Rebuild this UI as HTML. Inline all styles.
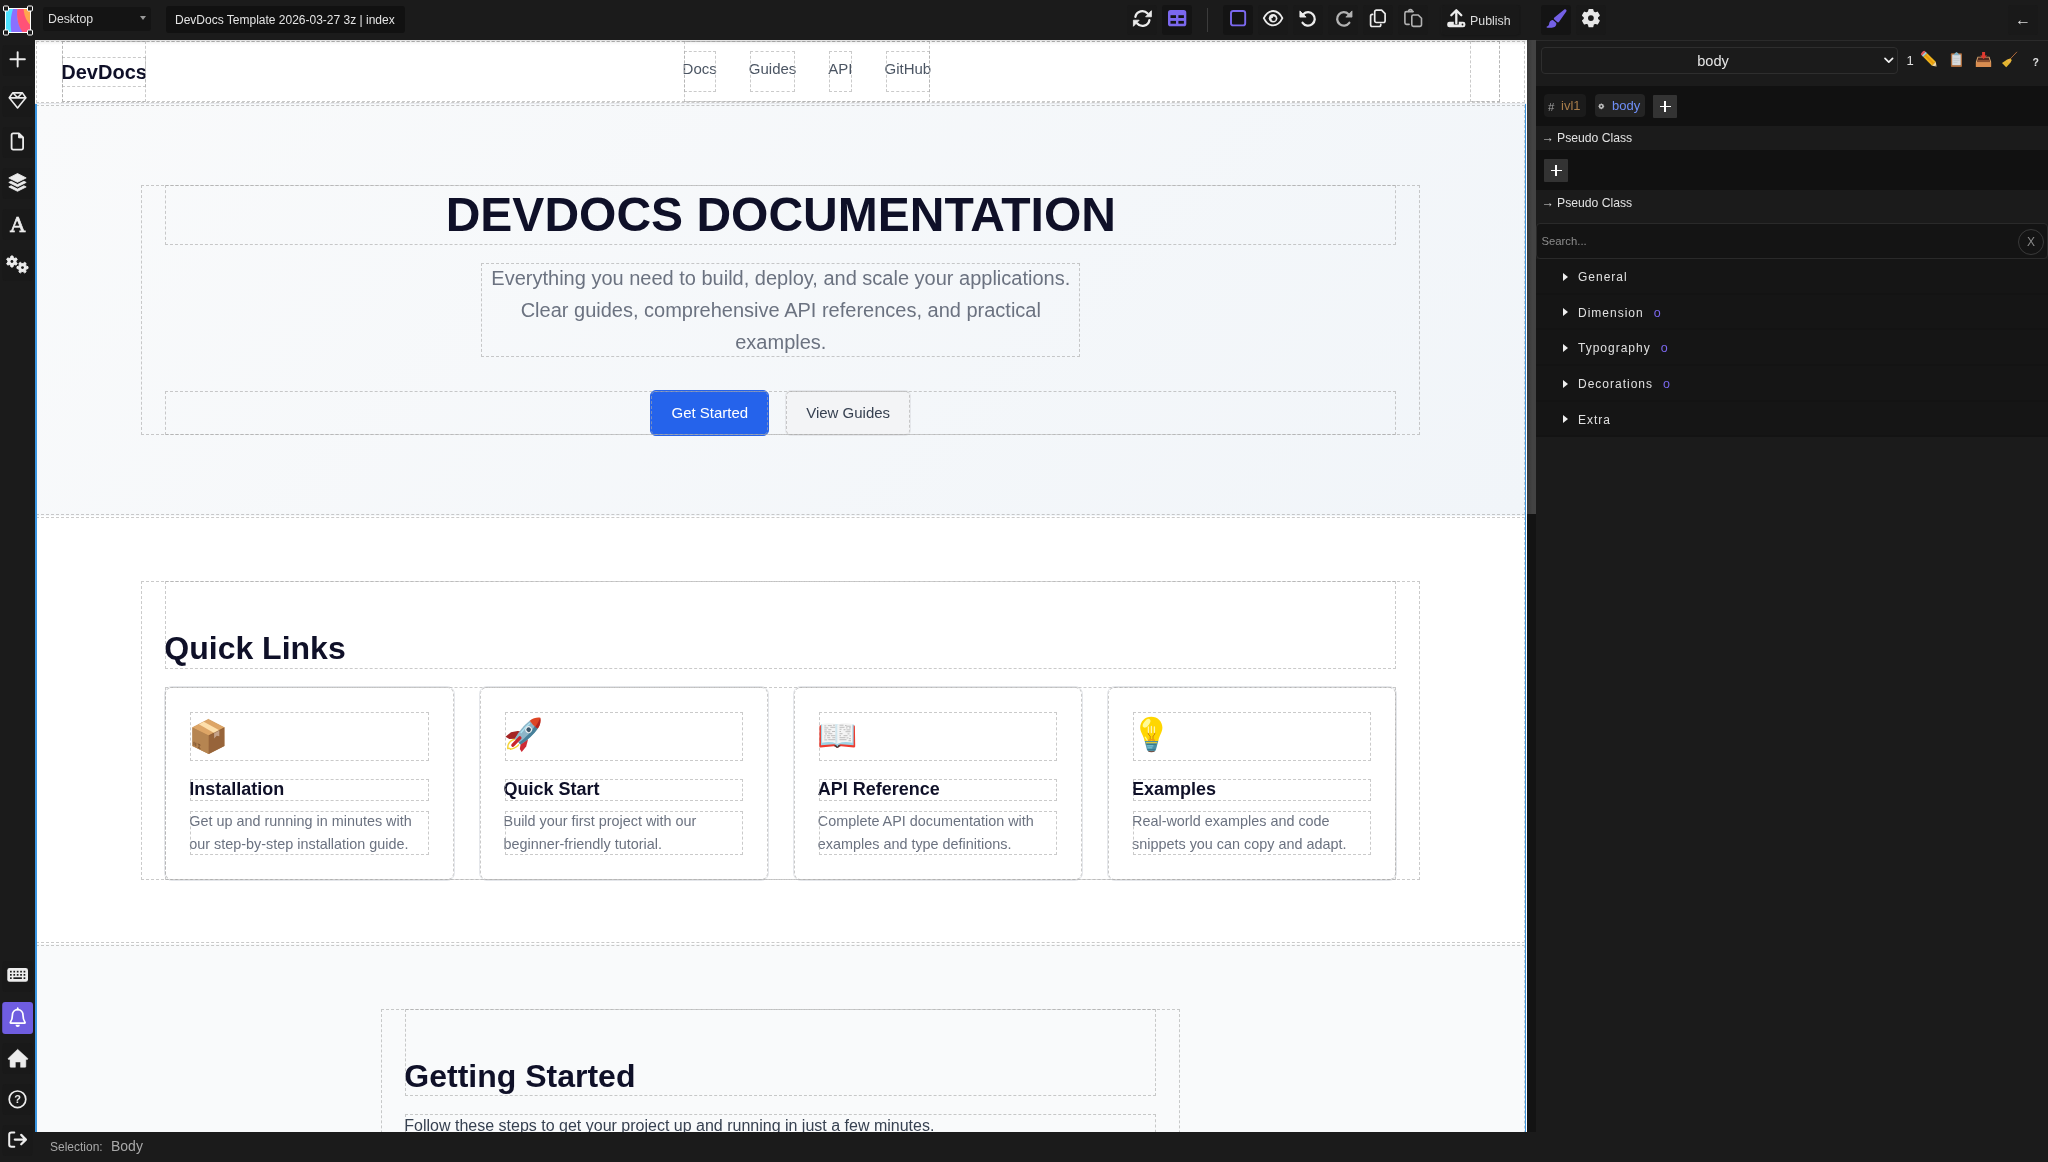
<!DOCTYPE html>
<html lang="en">
<head>
<meta charset="utf-8">
<title>DevDocs Template 2026-03-27 3z | index</title>
<style>
*{box-sizing:border-box}
html,body{margin:0;padding:0}
body{width:2048px;height:1162px;overflow:hidden;background:#1b1b1b;will-change:transform;font-family:"Liberation Sans",Arial,sans-serif;color:#ddd;position:relative}
svg{display:block}
.abs{position:absolute}

/* ---------- top bar ---------- */
#top{position:absolute;left:0;top:0;width:2048px;height:40px;background:#1b1b1b}
#logo{position:absolute;left:2px;top:5px;width:32px;height:31px}
#device{position:absolute;left:43px;top:7px;width:108px;height:24px;background:#141414;border-radius:3px;font-size:12.3px;line-height:25px;color:#ddd;padding-left:5px}
#device i{position:absolute;right:5px;top:9px;width:0;height:0;border-left:3.5px solid transparent;border-right:3.5px solid transparent;border-top:4.5px solid #999}
#title{position:absolute;left:166px;top:6px;width:239px;height:27px;background:#111;border-radius:3px;font-size:12px;line-height:29px;color:#e4e4e4;padding-left:9px;white-space:nowrap}
#sep{position:absolute;left:1207px;top:8px;width:1px;height:24px;background:#3c3c3c}
#publish{position:absolute;left:1441px;top:5px;width:78px;height:30px;border-radius:3px;box-shadow:0 1px 2px rgba(0,0,0,.18)}
#publish span{position:absolute;left:29px;top:0;line-height:33px;font-size:12.4px;color:#ddd}

/* ---------- left bar ---------- */
#left{position:absolute;left:0;top:40px;width:35px;height:1122px;background:#1b1b1b}

/* ---------- bottom bar ---------- */
#bottom{position:absolute;left:35px;top:1132px;width:2013px;height:30px;background:#1b1b1b;color:#aaa;white-space:nowrap}
#bottom .s1{position:absolute;left:15px;top:8px;font-size:12px;line-height:14px;color:#a8a8a8}
#bottom .s2{position:absolute;left:76px;top:5px;font-size:14px;line-height:18px;color:#a8a8a8}

/* ---------- canvas ---------- */
#canvas{position:absolute;left:35px;top:40px;width:1492px;height:1092px;overflow:hidden;background:#fff}
#canvas:after{content:"";position:absolute;left:0;top:0;width:1492px;height:5px;background:linear-gradient(180deg,rgba(0,0,0,.13),rgba(0,0,0,.04) 50%,rgba(0,0,0,0));z-index:9}
#scroll{position:absolute;left:1527px;top:40px;width:9px;height:1092px;background:#131313}
#scroll i{position:absolute;left:0;top:0;width:9px;height:474px;background:linear-gradient(90deg,#353535 0,#3d3d3d 30%,#434343 60%,#434343 100%)}
#page{position:absolute;left:.3px;top:0;width:1491px;font-family:"Liberation Sans",Arial,Helvetica,sans-serif;color:#374151;line-height:1.6;font-size:16px;background:#fff}
#page *{outline:1px dashed rgba(170,170,170,.62);outline-offset:-2px}
#page svg, #page svg *{outline:none}
#page header{position:absolute;left:0;top:0;width:1491px;height:64px;background:#fff;border-bottom:1px solid #e8eaee;z-index:5}
#page .hc{width:1440px;height:63px;margin:0 0 0 26px;display:flex;justify-content:space-between;align-items:stretch}
#page .logo{display:flex;align-items:center;font-size:20px;font-weight:700;color:#0f1028}
#page .logo span{display:block;line-height:32px}
#page nav{display:flex;align-items:center;gap:32px;height:63px;position:relative;left:-1.2px}
#page nav a{display:block;font-size:15px;line-height:24px;padding:7px 0 12px;color:#4b5563}
#page .hr{width:32px}
#page .hero{margin-top:64px;padding:80px 0;background:linear-gradient(135deg,#f9fafb 0%,#f1f5f9 100%);text-align:center}
#page .container{width:1281px;margin:0 auto;padding:0 24px}
#page h1{margin:0;font-size:48px;line-height:62.4px;font-weight:700;color:#0f1028;text-transform:uppercase}
#page .lead{width:601px;margin:16px auto 0;font-size:20px;line-height:32px;color:#6b7280}
#page .btns{margin-top:32px;height:46px;display:flex;justify-content:center;gap:16px}
#page .btn{display:block;font-size:15px;line-height:24px;padding:10px 20px;border-radius:6px;border:1px solid #2563eb;background:#2563eb;color:#fff}
#page .btn.alt{background:#f3f4f6;border-color:#e5e7eb;color:#374151}
#page section.s{padding:64px 0 63px}
#page section.gs{padding:64px 0}
#page .gs h2{margin-bottom:15.7px}
#page h2{margin:0 0 16px;padding-top:48px;font-size:32px;line-height:41.6px;font-weight:700;color:#0f1028}
#page .grid{display:grid;grid-template-columns:repeat(4,1fr);gap:24px}
#page .card{display:block;border:1px solid #e5e7eb;border-radius:8px;padding:24px;background:#fff}
#page .ic{height:51.2px;margin-bottom:16px;position:relative}
#page h3{margin:0 0 8px;font-size:18px;line-height:23.4px;font-weight:700;color:#0f1028}
#page .card p{margin:0;font-size:14.4px;line-height:23.04px;color:#6b7280}
#page .gs{background:#f9fafb}
#page .gs .container{width:801px}
#page .gs p{margin:0 0 16px;color:#374151}
#selL,#selR{position:absolute;top:64px;width:2px;height:1028px;background:#3b97e3;z-index:4}
#selL{left:0}#selR{left:1489.600px;width:1.600px}

/* ---------- right panel ---------- */

#right{position:absolute;left:1536px;top:40px;width:512px;height:1092px;background:#1b1b1b;font-size:12px;color:#ddd;white-space:nowrap}
#right .line{position:absolute;left:0;top:0;width:512px;height:1px;background:#2b2b2b}
#selbox{position:absolute;left:5px;top:7px;width:357px;height:27px;border:1px solid #2e2e2e;border-radius:4px;text-align:center;font-size:14.6px;line-height:27px;color:#e6e6e6;padding-right:13px}
#right .dark{position:absolute;left:0;width:512px;background:#111}
.tag{position:absolute;top:54px;height:23px;border-radius:4px;background:#1b1b1b;font-size:13px;line-height:23px}
.tag span{position:absolute;top:0}
.plusb{position:absolute;width:24px;height:23px;background:#333;border-radius:1px}
.plusb:before,.plusb:after{content:"";position:absolute;background:#fff}
.plusb:before{left:6.500px;top:10.900px;width:11px;height:1.300px}
.plusb:after{left:11.350px;top:6px;width:1.300px;height:11px}
.ph{position:absolute;left:21px;font-size:12.2px;line-height:16px;color:#e2e2e2}
.ph i{position:absolute;left:-15.5px;top:0;font-style:normal;font-size:12.500px;line-height:16px;color:#d8d8d8}
#search{position:absolute;left:0;top:183px;width:512px;height:36px;border:1px solid #2a2a2a;border-radius:4px;background:#141414;font-size:11.3px;line-height:35px;color:#8c8c8c;padding-left:4.5px}
#search i{position:absolute;right:3px;top:4.5px;width:26px;height:26px;border:1px solid #3a3a3a;border-radius:50%;font-style:normal;text-align:center;line-height:24px;font-size:12px;color:#8a8a8a}
.sector{position:absolute;left:0;width:512px;height:35.700px;background:#151515;border-bottom:2px solid #131313;font-size:12px;letter-spacing:1px;line-height:37px;color:#e0e0e0;padding-left:42px}
.sector:before{content:"";position:absolute;left:27px;top:13.500px;border-left:5px solid #eee;border-top:4px solid transparent;border-bottom:4px solid transparent}
.sector b{font-weight:400;color:#7b68ee;margin-left:10px;letter-spacing:0;font-size:12.500px}
</style>
</head>
<body>

<div id="top">
  <svg id="logo" viewBox="0 0 32 31">
    <defs><clipPath id="lc"><rect x="3.5" y="3.5" width="25" height="24"/></clipPath></defs>
    <g clip-path="url(#lc)">
      <rect x="3" y="3" width="26" height="25" fill="#4fe2ff"/>
      <path d="M11.5 3 C8 12 8.5 20 9.5 28 L22 28 C16 21 14 12 15.5 3Z" fill="#8a70ff"/>
      <path d="M15.5 3 C14 12 16 21 21 28 L29 28 L29 3Z" fill="#ff5277"/>
      <path d="M21.5 3 C22 11 24.5 16 29 21 L29 3Z" fill="#ffa64d"/>
    </g>
    <rect x="3.5" y="3.5" width="25" height="24" fill="none" stroke="#fff" stroke-width="1"/>
    <g fill="#1b1b1b" stroke="#fff" stroke-width="1"><rect x="1.5" y="1" width="5" height="5" rx="1"/><rect x="25.5" y="1" width="5" height="5" rx="1"/><rect x="1.5" y="25" width="5" height="5" rx="1"/><rect x="25.5" y="25" width="5" height="5" rx="1"/></g>
  </svg>
  <div id="device">Desktop<i></i></div>
  <div id="title">DevDocs Template 2026-03-27 3z | index</div>
  <div id="sep"></div>
  <svg id="topicons" class="abs" style="left:0;top:0" width="2048" height="40" viewBox="0 0 2048 40" fill="none">
    <!-- button plates -->
    <g fill="#141414"><rect x="1162" y="5" width="30" height="30" rx="3"/><rect x="1223" y="5" width="30" height="30" rx="3"/><rect x="1541" y="5" width="30" height="30" rx="3"/></g>
    <g fill="#191919"><rect x="1127" y="5" width="30" height="30" rx="3"/><rect x="1258" y="5" width="30" height="30" rx="3"/><rect x="1293" y="5" width="30" height="30" rx="3"/><rect x="1328" y="5" width="30" height="30" rx="3"/><rect x="1363" y="5" width="30" height="30" rx="3"/><rect x="1398" y="5" width="30" height="30" rx="3"/><rect x="1442" y="5" width="79" height="30" rx="3"/><rect x="1576" y="5" width="30" height="30" rx="3"/><rect x="2008" y="5" width="30" height="30" rx="3"/></g>
    <!-- sync -->
    <g stroke="#ececec" stroke-width="2.3" stroke-linecap="round">
      <path d="M1135.4 16.8A7 7 0 0 1 1147.6 13.6"/><path d="M1149.4 20.2A7 7 0 0 1 1137.2 23.4"/>
    </g>
    <path d="M1151.400 10.700V16.800H1145.600Z M1133.400 26.300V20.200H1139.200Z" fill="#ececec" stroke="#ececec" stroke-width="0.8" stroke-linejoin="round"/>
    <!-- table -->
    <rect x="1168" y="10.1" width="18.3" height="16.2" rx="2.6" fill="#7b68ee"/>
    <g fill="#141414"><rect x="1170.5" y="15.2" width="5.5" height="2.8"/><rect x="1178.4" y="15.2" width="5.5" height="2.8"/><rect x="1170.5" y="20.9" width="5.5" height="2.8"/><rect x="1178.4" y="20.9" width="5.5" height="2.8"/></g>
    <!-- square -->
    <rect x="1231" y="11" width="14.2" height="14.4" rx="2.2" stroke="#7b68ee" stroke-width="1.9"/>
    <!-- eye -->
    <path d="M1263.8 18.2C1266 13.6 1269.4 11 1273.1 11S1280.2 13.6 1282.4 18.2C1280.2 22.8 1276.8 25.4 1273.1 25.4S1266 22.8 1263.8 18.2Z" stroke="#ececec" stroke-width="1.8" stroke-linejoin="round"/>
    <circle cx="1273.1" cy="18.2" r="4.3" fill="#ececec"/><circle cx="1273.6" cy="18.7" r="2.2" fill="#1b1b1b"/><circle cx="1271.8" cy="16.9" r="1.2" fill="#ececec"/>
    <!-- undo -->
    <path d="M1303.3 14.2A6.7 6.7 0 1 1 1302.6 22.8" stroke="#ececec" stroke-width="2.3" stroke-linecap="round"/>
    <path d="M1299.9 10.9V17.1H1306.1Z" fill="#ececec" stroke="#ececec" stroke-width="0.8" stroke-linejoin="round"/>
    <!-- redo -->
    <path d="M1348.6 14.2A6.7 6.7 0 1 0 1349.3 22.8" stroke="#b2b2b2" stroke-width="2.3" stroke-linecap="round"/>
    <path d="M1352 10.9V17.1H1345.8Z" fill="#b2b2b2" stroke="#b2b2b2" stroke-width="0.8" stroke-linejoin="round"/>
    <!-- copy -->
    <g stroke="#ececec" stroke-width="1.7" stroke-linejoin="round" stroke-linecap="round">
      <path d="M1376.4 10.1h5.2l3.5 3.5v7.2a1.7 1.7 0 0 1-1.7 1.7h-7a1.7 1.7 0 0 1-1.7-1.7v-9a1.7 1.7 0 0 1 1.7-1.7Z"/>
      <path d="M1372.6 14.4h-0.3a1.7 1.7 0 0 0-1.7 1.7v8.7a1.7 1.7 0 0 0 1.7 1.7h6.8a1.7 1.7 0 0 0 1.7-1.7v-0.4"/>
    </g>
    <!-- paste -->
    <g stroke="#b2b2b2" stroke-width="1.6" stroke-linejoin="round" stroke-linecap="round">
      <path d="M1413.2 11.6h-6.7a1.6 1.6 0 0 0-1.6 1.6v9.6a1.6 1.6 0 0 0 1.6 1.6h2.6"/>
      <path d="M1408.6 11.4a1.8 1.8 0 0 1 3.6 0"/>
      <path d="M1413.4 15h4.8l3.3 3.3v6.5a1.6 1.6 0 0 1-1.6 1.6h-6.5a1.6 1.6 0 0 1-1.6-1.6v-8.2a1.6 1.6 0 0 1 1.6-1.6Z"/>
    </g>
    <!-- upload -->
    <rect x="1447.2" y="21.7" width="18.2" height="5.6" rx="2.3" fill="#ececec"/>
    <path d="M1456.3 24.5V11" stroke="#1b1b1b" stroke-width="5"/>
    <path d="M1456.3 23.2V10.6M1451.3 15.3l5-5 5 5" stroke="#ececec" stroke-width="2.3" stroke-linecap="round" stroke-linejoin="round"/>
    <circle cx="1462.5" cy="24.5" r="0.9" fill="#1b1b1b"/>
    <!-- brush -->
    <path d="M1564.3 9.5c1.3-1 2.9.5 2 1.9l-7.2 10.4c-.5.7-1.4.8-2 .2l-2.8-2.6c-.6-.6-.6-1.500.1-2Z" fill="#7460e6"/>
    <path d="M1552.900 19.900l3.400 3.200c.4 2.800-1.800 4.700-4.500 4.700h-4.500c-.8 0-1-.9-.3-1.200 1.700-.8 2-1.800 2.200-3.200.3-2.100 1.800-3.400 3.700-3.500Z" fill="#7460e6"/>
    <!-- gear -->
    <path d="M1593.20 11.91 L1592.71 9.59 L1589.09 9.59 L1588.60 11.91 L1586.69 13.01 L1584.43 12.28 L1582.63 15.41 L1584.39 17.00 L1584.39 19.20 L1582.63 20.79 L1584.43 23.92 L1586.69 23.19 L1588.60 24.29 L1589.09 26.61 L1592.71 26.61 L1593.20 24.29 L1595.11 23.19 L1597.37 23.92 L1599.17 20.79 L1597.41 19.20 L1597.41 17.00 L1599.17 15.41 L1597.37 12.28 L1595.11 13.01Z" fill="#e8e8e8" stroke="#e8e8e8" stroke-width="1.300" stroke-linejoin="round"/>
    <circle cx="1590.900" cy="18.100" r="2.900" fill="#1b1b1b"/>
  </svg>
  <div id="publish"><span>Publish</span></div>
  <span class="abs" style="left:2015px;top:11.500px;font-size:16px;line-height:16px;color:#dcdcdc">←</span>
</div>

<div id="left">
  <svg class="abs" style="left:0;top:0" width="35" height="1122" viewBox="0 0 35 1122" fill="none">
    <g fill="#191919"><rect x="2.500" y="5" width="30" height="31" rx="3"/><rect x="2.500" y="46" width="30" height="31" rx="3"/><rect x="2.500" y="87" width="30" height="31" rx="3"/><rect x="2.500" y="128" width="30" height="31" rx="3"/><rect x="2.500" y="169" width="30" height="31" rx="3"/><rect x="2.500" y="210" width="30" height="31" rx="3"/>
    <rect x="2.500" y="921" width="30" height="31" rx="3"/><rect x="2.500" y="1003" width="30" height="31" rx="3"/><rect x="2.500" y="1044" width="30" height="31" rx="3"/><rect x="2.500" y="1085" width="30" height="31" rx="3"/></g>
    <rect x="2.200" y="962" width="30.800" height="32" rx="3" fill="#6f5de0"/>
    <!-- plus -->
    <path d="M10.400 19.300h14.500M17.650 12.100v14.500" stroke="#ececec" stroke-width="1.9" stroke-linecap="round"/>
    <!-- gem -->
    <g stroke="#ececec" stroke-width="1.6" stroke-linejoin="round" stroke-linecap="round">
      <path d="M12.700 52.900h9.700l3.400 4.900-8.250 10.200-8.250-10.200Z"/>
      <path d="M9.600 57.900h15.900M13.400 53.200l4.150 4.500 4.150-4.500"/>
    </g>
    <!-- file -->
    <path d="M13.200 93.300h5.700l4.200 4.200v10.600a1.600 1.600 0 0 1-1.600 1.600h-8.300a1.600 1.600 0 0 1-1.600-1.600v-13.200a1.600 1.600 0 0 1 1.600-1.600Z" stroke="#ececec" stroke-width="1.8" stroke-linejoin="round"/>
    <path d="M18.600 93.300v4.500h4.500Z" fill="#ececec" stroke="#ececec" stroke-width="1" stroke-linejoin="round"/>
    <!-- layers -->
    <g fill="#ececec" stroke="#ececec" stroke-width="0.8" stroke-linejoin="round">
      <path d="M17.500 133.500l8.700 4.400-8.700 4.400-8.700-4.400Z"/>
      <path d="M8.800 142.400l2.300-1.150 6.400 3.250 6.400-3.250 2.300 1.150-8.700 4.400Z"/>
      <path d="M8.800 146.900l2.300-1.150 6.400 3.250 6.400-3.250 2.300 1.150-8.700 4.400Z"/>
    </g>
    <!-- font -->
    <text x="17.700" y="191.500" text-anchor="middle" font-family="'DejaVu Serif','Liberation Serif',serif" font-weight="400" font-size="20.500" fill="#ececec" stroke="#ececec" stroke-width=".7">A</text>
    <!-- cogs -->
    <path d="M13.42 217.78 L12.88 215.98 L11.02 215.98 L10.48 217.78 L9.47 218.37 L7.64 217.93 L6.70 219.55 L7.99 220.92 L7.99 222.08 L6.70 223.45 L7.64 225.07 L9.47 224.63 L10.48 225.22 L11.02 227.02 L12.88 227.02 L13.42 225.22 L14.43 224.63 L16.26 225.07 L17.20 223.45 L15.91 222.08 L15.91 220.92 L17.20 219.55 L16.26 217.93 L14.43 218.37Z" fill="#ececec" stroke="#ececec" stroke-width="1" stroke-linejoin="round"/><circle cx="11.950" cy="221.500" r="1.400" fill="#1b1b1b"/>
    <path d="M26.22 229.07 L28.02 228.53 L28.02 226.67 L26.22 226.13 L25.63 225.12 L26.07 223.29 L24.45 222.35 L23.08 223.64 L21.92 223.64 L20.55 222.35 L18.93 223.29 L19.37 225.12 L18.78 226.13 L16.98 226.67 L16.98 228.53 L18.78 229.07 L19.37 230.08 L18.93 231.91 L20.55 232.85 L21.92 231.56 L23.08 231.56 L24.45 232.85 L26.07 231.91 L25.63 230.08Z" fill="#ececec" stroke="#ececec" stroke-width="1" stroke-linejoin="round"/><circle cx="22.500" cy="227.600" r="1.400" fill="#1b1b1b"/>
    <!-- keyboard -->
    <rect x="7.300" y="928.100" width="20.700" height="13.600" rx="2.300" fill="#ececec"/>
    <g fill="#1b1b1b">
      <rect x="10" y="930.800" width="1.700" height="1.700"/><rect x="13.400" y="930.800" width="1.700" height="1.700"/><rect x="16.800" y="930.800" width="1.700" height="1.700"/><rect x="20.200" y="930.800" width="1.700" height="1.700"/><rect x="23.600" y="930.800" width="1.700" height="1.700"/>
      <rect x="10" y="934" width="1.700" height="1.700"/><rect x="13.400" y="934" width="1.700" height="1.700"/><rect x="16.800" y="934" width="1.700" height="1.700"/><rect x="20.200" y="934" width="1.700" height="1.700"/><rect x="23.600" y="934" width="1.700" height="1.700"/>
      <rect x="10" y="937.300" width="1.700" height="1.700"/><rect x="13.400" y="937.300" width="8.500" height="1.700"/><rect x="23.600" y="937.300" width="1.700" height="1.700"/>
    </g>
    <!-- bell -->
    <path d="M17.700 969.700c-3.300 0-5.300 2.500-5.300 5.600 0 3.800-.9 5.500-2 6.900-.3.400 0 .9.400.9h13.800c.5 0 .7-.5.400-.9-1.100-1.400-2-3.100-2-6.900 0-3.100-2-5.600-5.300-5.600Z" stroke="#fff" stroke-width="1.700" stroke-linejoin="round"/>
    <path d="M17.700 968.200v1.300" stroke="#fff" stroke-width="1.700" stroke-linecap="round"/>
    <path d="M15.500 984.700h4.400a2.200 2.200 0 0 1-4.400 0Z" fill="#fff"/>
    <!-- home -->
    <path d="M17.650 1009.300l10.100 9.100c.4.400.1 1-.4 1h-1.500v7a.9.900 0 0 1-.9.900h-4.400v-5.300h-5.200v5.300h-4.400a.9.900 0 0 1-.9-.9v-7h-1.500c-.5 0-.8-.6-.4-1Z" fill="#ececec" stroke="#ececec" stroke-width="0.500" stroke-linejoin="round"/>
    <!-- help -->
    <circle cx="17.500" cy="1059.300" r="8.300" stroke="#ececec" stroke-width="1.700"/>
    <text x="17.500" y="1063.300" text-anchor="middle" font-family="'Liberation Sans',sans-serif" font-weight="700" font-size="11" fill="#ececec">?</text>
    <!-- sign out -->
    <path d="M14.300 1092.500h-2.800a2.300 2.300 0 0 0-2.300 2.300v9.600a2.300 2.300 0 0 0 2.300 2.300h2.800" stroke="#ececec" stroke-width="2" stroke-linecap="round"/>
    <path d="M14.800 1099.600h10.600M21.200 1094.900l4.700 4.700-4.700 4.700" stroke="#ececec" stroke-width="2.200" stroke-linecap="round" stroke-linejoin="round"/>
  </svg>
</div>

<div id="canvas">
 <div id="page">
  <header>
    <div class="hc">
      <a class="logo"><span>DevDocs</span></a>
      <nav><a>Docs</a><a>Guides</a><a>API</a><a>GitHub</a></nav>
      <div class="hr"></div>
    </div>
  </header>
  <section class="hero">
    <div class="container">
      <h1>DevDocs Documentation</h1>
      <p class="lead">Everything you need to build, deploy, and scale your applications. Clear guides, comprehensive API references, and practical examples.</p>
      <div class="btns"><a class="btn">Get Started</a><a class="btn alt">View Guides</a></div>
    </div>
  </section>
  <section class="s">
    <div class="container">
      <h2>Quick Links</h2>
      <div class="grid">
        <a class="card"><div class="ic"><svg class="abs" style="left:.2px;top:.7px" width="44" height="51" viewBox="0 0 44 51">
<path d="M19.400 7.200L35.400 15.500V33.900L19.700 42.100 3.400 33.900V15.500Z" fill="#b68551"/>
<path d="M19.400 7.200L35.400 15.500 19.700 23.500 3.400 15.500Z" fill="#dda566" stroke="#dda566" stroke-width=".3"/>
<path d="M3.400 15.500L19.700 23.500V42.100L3.400 33.900Z" fill="#b68551"/>
<path d="M19.700 23.500L35.400 15.500V33.900L19.700 42.100Z" fill="#97643a"/>
<path d="M9.900 12.200L14.800 9.700 30.300 18.200 25.100 20.900Z" fill="#fddfab"/>
<path d="M25.100 20.900L30.300 18.200V24.300L27.700 23.700 25.100 26.600Z" fill="#c5a38a"/>
<path d="M19.700 23.700L35.400 15.700" stroke="#7d4f2b" stroke-width=".6" opacity=".6"/>
<path d="M5 29.800v3.600M6.800 30.700v3.600M8.700 31.800l2.800 1.400M10.100 32.500v3.300M8.900 35.400l2.600 1.300" stroke="#6b4424" stroke-width=".9" opacity=".8"/>
</svg></div><h3>Installation</h3><p>Get up and running in minutes with our step-by-step installation guide.</p></a>
        <a class="card"><div class="ic"><svg class="abs" style="left:0px;top:-.6px" width="44" height="51" viewBox="0 0 44 51">
<g transform="translate(36.300 7.700) rotate(43.400)">
<path d="M-3.800 33C-6.400 37.500-5.400 42-2.400 44.800-1.800 43.400-.8 42.900 0 43.500 1.200 41.500 3.300 38.500 2.800 34" fill="none" stroke="#f6d436" stroke-width="1.400" stroke-linejoin="round"/>
<path d="M-5 23.500L-7.400 25.200-11.400 30.700-12.200 37.800-7.800 36.800-4 32.600Z" fill="#a42424"/>
<path d="M5 23.500L6.600 25.200 9.600 30.700 10.100 37.800 6.600 36.800 3.800 32.600Z" fill="#cd2b35"/>
<path d="M-5.600 9.500C-6.600 16-6.200 25-4 33L4 33C6.200 25 6.600 16 5.600 9.500Z" fill="#8db5c8"/>
<path d="M1.500 9.600C3 16 3.200 25 1.500 33L4 33C6.200 25 6.600 16 5.600 9.500Z" fill="#47809a"/>
<path d="M-3.800 11.500C-4.400 16-4.300 20-3.800 24" stroke="#aee3f2" stroke-width="1.300" fill="none" stroke-linecap="round"/>
<path d="M0 0C-2.800 2-5.100 5.500-5.600 9.500Q0 11 5.600 9.500C5.100 5.500 2.800 2 0 0Z" fill="#de4525"/>
<path d="M0 0C1.200 3 2.300 7 2.600 10.200Q4.200 10 5.600 9.500C5.100 5.500 2.800 2 0 0Z" fill="#b4231f"/>
<circle cx="-.2" cy="16.700" r="3.400" fill="#e9eef0"/><circle cx="-.2" cy="16.700" r="2.300" fill="#3c566a"/>
<rect x="-2.700" y="27" width="3.400" height="13.500" rx="1.700" fill="#c9252d"/>
</g>
</svg></div><h3>Quick Start</h3><p>Build your first project with our beginner-friendly tutorial.</p></a>
        <a class="card"><div class="ic"><svg class="abs" style="left:.2px;top:-.4px" width="44" height="51" viewBox="0 0 44 51">
<path d="M2.600 14.200Q1.500 14.300 1.500 15.500L1.300 35.600Q1.400 36.700 2.700 36.600L15.500 35.300Q17.200 35.200 18 36.300 19.300 37.400 20.600 36.300 21.500 35.200 23.200 35.300L35.800 36.600Q37.100 36.700 37.200 35.600L36.900 15.500Q36.900 14.300 35.700 14.200Z" fill="#ee3b2e"/>
<path d="M16.300 34.200H22.300V35.300Q21.200 35.300 20.600 36.300 19.300 37.400 18 36.300 17.300 35.300 16.300 35.300Z" fill="#3a3a3a"/>
<path d="M2.900 13.600L3 34.300 16 33.300Q18.500 33.200 19.300 35.800 20.100 33.200 22.600 33.300L35.600 34.300 35.700 13.600Z" fill="#9dd3e5"/>
<path d="M4.100 12.900V31.800Q12 29.800 18.400 32.400L19.300 33 20.200 32.400Q26.600 29.800 34.400 31.800V12.900Q26.800 11.200 20.200 13.300L19.300 13.700 18.400 13.300Q11.800 11.200 4.100 12.900Z" fill="#f4f4f4"/>
<path d="M17.300 12.800L19.300 13.700V33L17.300 32Z" fill="#cfe6ee"/>
<g stroke="#9a9a9a" stroke-width=".7" opacity=".85"><path d="M6.300 14.900h2M9.800 14.600h4M15 14.200h2M6.300 16.900h4M12.300 16.300h5M6.300 18.900h2.500M10.300 18.700h3M6.300 20.900h6M14 20.500h3M7 22.900h2M10.300 22.700h4M6.300 24.900h1.500M8.800 24.700h3M12.800 24.700h4.500M6.300 26.900h1.200M9.300 26.700h3M14.300 26.700h3M6.300 28.900h3M10.300 28.700h7"/>
<path d="M21.500 14.200h4M27 14.600h1.500M28.300 15.200h4.500M21.500 16.300h5M28 16.900h1.500M31 16.900h2M21.500 18.300h2M25.500 18.700h2M28.500 18.900h4M21.500 20.500h1.500M27.500 20.700h5M21.500 22.700h3M29.500 22.900h2M21.500 24.700h1.500M25.500 24.700h4M31.500 24.900h1.500M21.500 26.700h6M28.500 26.900h2M31 27.700h2M21.500 28.700h7M30.500 29.700h2.500"/></g>
</svg></div><h3>API Reference</h3><p>Complete API documentation with examples and type definitions.</p></a>
        <a class="card"><div class="ic"><svg class="abs" style="left:-.2px;top:-.7px" width="44" height="51" viewBox="0 0 44 51">
<path d="M12.600 30.700H26.300L24 39.500Q23.500 41.200 21.700 41.700 19.400 42.300 17.200 41.700 15.400 41.200 14.900 39.500Z" fill="#4b8ea4"/>
<path d="M16.500 41.300Q19.400 42.600 22.400 41.300 19.400 41.600 16.500 41.300Z" fill="#7b4a3a" stroke="#7b4a3a" stroke-width=".6"/>
<path d="M13.700 32.700H25.200" stroke="#f5d328" stroke-width="1.100"/>
<path d="M15 35.900H21M15.800 37.900H20" stroke="#8fdcec" stroke-width=".9" stroke-linecap="round"/>
<path d="M14.700 34.400H24.200M15.600 39.400H23" stroke="#2f7489" stroke-width=".8"/>
<path d="M19.300 6.700C12.800 6.700 8.200 11.600 8.200 17.600 8.200 22.500 11.400 25 12.600 30.900H26.300C27.500 25 30.400 22.500 30.400 17.600 30.400 11.600 25.800 6.700 19.300 6.700Z" fill="#ffd600"/>
<ellipse cx="14.600" cy="13.300" rx="2.700" ry="5" transform="rotate(38 14.600 13.300)" fill="#fffb98"/>
<path d="M13.200 27.200l2 3" stroke="#fffb98" stroke-width="1.200" stroke-linecap="round"/>
<path d="M16.400 17v5.500M19.400 16.500v6M22.400 17v5.500" stroke="#fff6c0" stroke-width="1.300" stroke-linecap="round" opacity=".9"/>
<path d="M15.900 22.800l1 2.200 1.300 1v4.500M23 22.800l-.7 2.200-1.300 1v4.500" stroke="#c97a0f" stroke-width=".9" fill="none"/>
<path d="M16 30.500Q19.400 28.800 23 30.500" stroke="#f29a17" stroke-width="1.400" fill="none"/>
</svg></div><h3>Examples</h3><p>Real-world examples and code snippets you can copy and adapt.</p></a>
      </div>
    </div>
  </section>
  <section class="s gs">
    <div class="container">
      <h2>Getting Started</h2>
      <p>Follow these steps to get your project up and running in just a few minutes.</p>
      <p>&nbsp;</p>
    </div>
  </section>
  <div id="selL" style="outline:none"></div><div id="selR" style="outline:none"></div>
 </div>
</div>
<div id="scroll"><i></i></div>

<div id="right">
  <div class="line"></div>
  <div id="selbox">body</div>
  <svg class="abs" style="left:0;top:0;z-index:3" width="512" height="90" viewBox="0 0 512 90" fill="none">
    <path d="M349 18.300l3.800 3.800 3.800-3.800" stroke="#f2f2f2" stroke-width="1.700" stroke-linecap="round" stroke-linejoin="round"/>
    <!-- pencil -->
    <g transform="translate(386.200 12.100) rotate(45)">
      <rect x="0" y="-2.700" width="3.300" height="5.400" rx="1.600" fill="#e0575c"/>
      <rect x="2.300" y="-2.700" width="2" height="5.400" fill="#9fd0dc"/>
      <rect x="4.300" y="-2.700" width="12.200" height="5.400" fill="#f0b41b"/>
      <rect x="4.300" y="-.9" width="12.200" height="1.800" fill="#e8980f"/>
      <path d="M16.500-2.700L20.300 0 16.500 2.700Z" fill="#f2d8a2"/>
      <path d="M19 -.9L20.600 0 19 .9Z" fill="#555"/>
    </g>
    <!-- clipboard -->
    <rect x="414.900" y="13.200" width="11.100" height="13.800" rx="1" fill="#a96a3b"/>
    <rect x="416.200" y="14.600" width="8.500" height="10.600" fill="#d6dadd"/>
    <path d="M417.600 15.200l1.500-2.200 1.400-1.100 1.400 1.100 1.500 2.200Z" fill="#80b1c5"/>
    <path d="M417.400 18.400h6M417.400 20.400h6M417.400 22.400h4" stroke="#b9bec2" stroke-width=".6"/>
    <!-- inbox -->
    <path d="M441.500 16.800h12l1.600 5v5.300h-15.200v-5.300Z" fill="#dba66d"/>
    <path d="M442.200 17.500h10.600l1.200 4.200h-13Z" fill="#4f2a20"/>
    <path d="M441.700 20h11.800l.7 2.600h-13.200Z" fill="#8b4f2e"/>
    <rect x="439.900" y="22.200" width="15.200" height="4.900" rx=".6" fill="#d98d50"/>
    <path d="M446.100 12h3v3.400h2l-3.500 3.600-3.500-3.600h2Z" fill="#e03a30"/>
    <!-- broom -->
    <path d="M480.700 12.100L474 19.200" stroke="#b0693b" stroke-width="1" stroke-linecap="round"/>
    <path d="M474.200 18.400l1.600 1.600-1.200 2.600-4.400 4.600-4.200-4.200 5.200-3.600Z" fill="#e7b933"/>
    <path d="M472 19.800l2.200 2.200" stroke="#f3a860" stroke-width="1.100"/>
    <path d="M467.800 22.300l3.600 3.800M469.600 21.200l3.200 3.400" stroke="#c99a25" stroke-width=".5"/>
    <!-- tag gear -->
    <g transform="translate(65.300 66.300) scale(.72)"><path d="M.6-4l.6 1 1.100-.2.900.9-.2 1.100 1 .6v1.200l-1 .6.200 1.100-.9.900-1.100-.2-.6 1h-1.200l-.6-1-1.100.2-.9-.9.200-1.100-1-.6v-1.200l1-.6-.2-1.100.9-.9 1.100.2.600-1Z" fill="#bdbdbd"/><circle cx="0" cy="0" r="1.300" fill="#242424"/></g>
  </svg>
  <span class="abs" style="left:370.500px;top:12.500px;font-size:13px;line-height:16px;color:#e0e0e0">1</span>
  <span class="abs" style="left:496.500px;top:13.500px;font-size:10.500px;font-weight:700;line-height:16px;color:#e0e0e0">?</span>
  <div class="dark" style="top:46px;height:40px"></div>
  <div class="tag" style="left:8px;width:42px"><span style="left:4px;top:1.500px;color:#a0a0a0;font-size:11.500px">#</span><span style="left:17px;color:#a87d4a">ivl1</span></div>
  <div class="tag" style="left:58.500px;width:50px;background:#242424"><span style="left:17.500px;color:#6f8ff7">body</span></div>
  <div class="plusb" style="left:117px;top:55px"></div>
  <div class="ph" style="top:90px"><i>→</i>Pseudo Class</div>
  <div class="dark" style="top:110px;height:40px"></div>
  <div class="plusb" style="left:8px;top:119px"></div>
  <div class="ph" style="top:154.500px"><i>→</i>Pseudo Class</div>
  <div id="search">Search...<i>X</i></div>
  <div class="sector" style="top:219px">General</div>
  <div class="sector" style="top:254.700px">Dimension<b>o</b></div>
  <div class="sector" style="top:290.400px">Typography<b>o</b></div>
  <div class="sector" style="top:326.100px">Decorations<b>o</b></div>
  <div class="sector" style="top:361.800px">Extra</div>
</div>

<div id="bottom"><span class="s1">Selection:</span><span class="s2">Body</span></div>

</body>
</html>
